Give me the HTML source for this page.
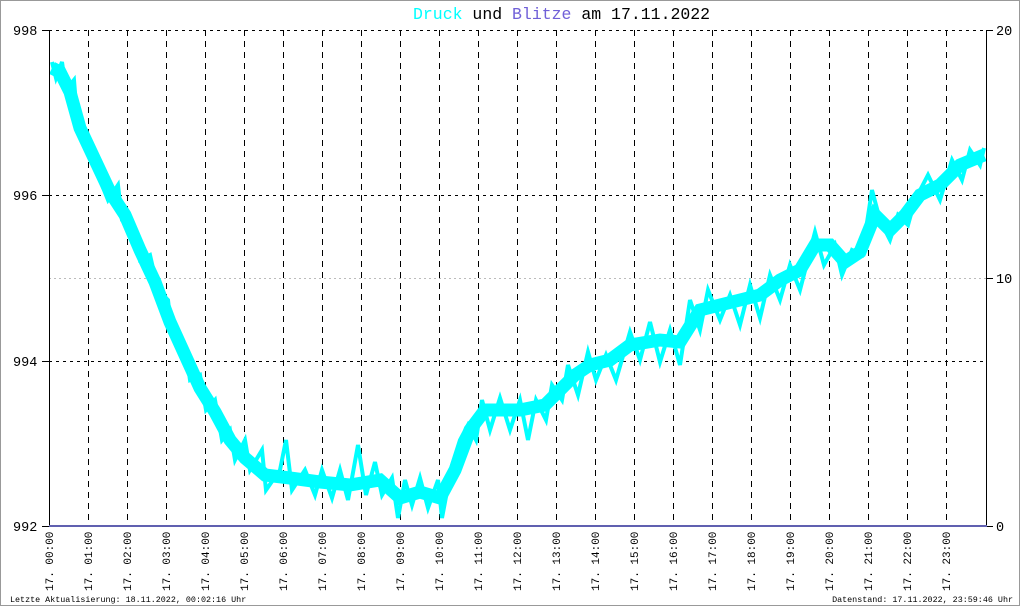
<!DOCTYPE html>
<html><head><meta charset="utf-8"><style>
html,body{margin:0;padding:0;background:#fff}
svg{display:block}
text{font-family:"Liberation Mono",monospace}
</style></head><body>
<svg width="1020" height="606" viewBox="0 0 1020 606" xmlns="http://www.w3.org/2000/svg">
<rect x="0.5" y="0.5" width="1019" height="605" fill="#fff" stroke="#999"/>
<text x="413" y="19" font-size="16.5"><tspan fill="#00ffff">Druck</tspan><tspan fill="#000"> und </tspan><tspan fill="#7060d8">Blitze</tspan><tspan fill="#000"> am 17.11.2022</tspan></text>
<g stroke="#000" stroke-width="1" stroke-dasharray="3,4">
<line x1="49" y1="30.5" x2="987" y2="30.5"/>
<line x1="49" y1="195.5" x2="987" y2="195.5"/>
<line x1="49" y1="361.5" x2="987" y2="361.5"/>
</g>
<line x1="49" y1="278.5" x2="987" y2="278.5" stroke="#bbb" stroke-dasharray="2,3"/>
<g stroke="#000" stroke-dasharray="6,5">
<line x1="88.5" y1="30" x2="88.5" y2="526"/><line x1="127.5" y1="30" x2="127.5" y2="526"/>
<line x1="166.5" y1="30" x2="166.5" y2="526"/><line x1="205.5" y1="30" x2="205.5" y2="526"/>
<line x1="244.5" y1="30" x2="244.5" y2="526"/><line x1="283.5" y1="30" x2="283.5" y2="526"/>
<line x1="322.5" y1="30" x2="322.5" y2="526"/><line x1="361.5" y1="30" x2="361.5" y2="526"/>
<line x1="400.5" y1="30" x2="400.5" y2="526"/><line x1="439.5" y1="30" x2="439.5" y2="526"/>
<line x1="478.5" y1="30" x2="478.5" y2="526"/><line x1="517.5" y1="30" x2="517.5" y2="526"/>
<line x1="556.5" y1="30" x2="556.5" y2="526"/><line x1="595.5" y1="30" x2="595.5" y2="526"/>
<line x1="634.5" y1="30" x2="634.5" y2="526"/><line x1="673.5" y1="30" x2="673.5" y2="526"/>
<line x1="712.5" y1="30" x2="712.5" y2="526"/><line x1="751.5" y1="30" x2="751.5" y2="526"/>
<line x1="790.5" y1="30" x2="790.5" y2="526"/><line x1="829.5" y1="30" x2="829.5" y2="526"/>
<line x1="868.5" y1="30" x2="868.5" y2="526"/><line x1="907.5" y1="30" x2="907.5" y2="526"/>
<line x1="946.5" y1="30" x2="946.5" y2="526"/>
</g>
<polyline fill="none" stroke="#00ffff" stroke-width="13" stroke-linejoin="miter" points="52,68 60,72 70,92 80,128 95,160 110,192 125,215 140,250 155,282 170,322 185,355 200,388 215,412 230,440 245,458 265,475 290,478 320,482 350,485 380,480 400,498 420,492 440,498 455,470 470,430 485,410 520,410 545,405 560,390 575,375 590,365 610,360 630,345 660,340 680,342 700,310 720,305 740,300 760,295 780,280 800,270 815,245 830,245 845,262 860,252 875,215 890,230 905,215 920,195 940,185 960,165 984,155"/>
<polyline fill="none" stroke="#00ffff" stroke-width="4" points="52,62 56,78 62,62 66,90 74,80 78,130 90,140 100,180 108,200 118,185 122,220 135,230 140,260 150,255 158,290 168,300 172,335 185,345 190,380 200,375 206,410 215,400 222,440 230,430 235,460 245,440 250,470 262,450 266,490 280,470 286,440 292,490 305,470 315,495 322,470 332,498 340,470 348,500 358,445 366,495 375,462 382,495 392,478 398,518 405,480 412,505 420,478 428,508 438,480 442,518 452,465 460,440 468,425 476,440 482,400 490,430 500,398 510,430 520,400 528,440 536,400 546,420 552,385 562,400 568,365 578,395 588,352 596,380 606,355 616,380 630,332 640,360 650,322 660,362 670,330 680,365 690,300 700,330 708,290 720,320 730,295 740,325 750,285 760,318 770,275 780,300 790,265 800,290 815,232 824,265 835,245 842,275 852,250 862,255 872,190 880,220 890,240 898,215 908,225 915,200 928,175 940,200 952,160 962,180 970,150 980,165 984,148"/>
<line x1="49.5" y1="30" x2="49.5" y2="526" stroke="#000"/>
<line x1="986.5" y1="30" x2="986.5" y2="526" stroke="#000"/>
<line x1="49" y1="526" x2="987" y2="526" stroke="#6060b0" stroke-width="2"/>
<g stroke="#000"><line x1="42" y1="30.5" x2="49" y2="30.5"/><line x1="42" y1="195.5" x2="49" y2="195.5"/><line x1="42" y1="361.5" x2="49" y2="361.5"/><line x1="42" y1="526.5" x2="49" y2="526.5"/>
<line x1="987" y1="30.5" x2="993" y2="30.5"/><line x1="987" y1="278.5" x2="993" y2="278.5"/><line x1="987" y1="526.5" x2="993" y2="526.5"/></g>
<g font-size="13.5" fill="#000">
<text x="13" y="35">998</text><text x="13" y="200">996</text><text x="13" y="366">994</text><text x="13" y="531">992</text>
<text x="996" y="35">20</text><text x="996" y="283">10</text><text x="996" y="531">0</text>
</g>
<g font-size="11" fill="#000">
<text transform="translate(53,591) rotate(-90)">17. 00:00</text>
<text transform="translate(92,591) rotate(-90)">17. 01:00</text>
<text transform="translate(131,591) rotate(-90)">17. 02:00</text>
<text transform="translate(170,591) rotate(-90)">17. 03:00</text>
<text transform="translate(209,591) rotate(-90)">17. 04:00</text>
<text transform="translate(248,591) rotate(-90)">17. 05:00</text>
<text transform="translate(287,591) rotate(-90)">17. 06:00</text>
<text transform="translate(326,591) rotate(-90)">17. 07:00</text>
<text transform="translate(365,591) rotate(-90)">17. 08:00</text>
<text transform="translate(404,591) rotate(-90)">17. 09:00</text>
<text transform="translate(443,591) rotate(-90)">17. 10:00</text>
<text transform="translate(482,591) rotate(-90)">17. 11:00</text>
<text transform="translate(521,591) rotate(-90)">17. 12:00</text>
<text transform="translate(560,591) rotate(-90)">17. 13:00</text>
<text transform="translate(599,591) rotate(-90)">17. 14:00</text>
<text transform="translate(638,591) rotate(-90)">17. 15:00</text>
<text transform="translate(677,591) rotate(-90)">17. 16:00</text>
<text transform="translate(716,591) rotate(-90)">17. 17:00</text>
<text transform="translate(755,591) rotate(-90)">17. 18:00</text>
<text transform="translate(794,591) rotate(-90)">17. 19:00</text>
<text transform="translate(833,591) rotate(-90)">17. 20:00</text>
<text transform="translate(872,591) rotate(-90)">17. 21:00</text>
<text transform="translate(911,591) rotate(-90)">17. 22:00</text>
<text transform="translate(950,591) rotate(-90)">17. 23:00</text>
</g>
<text x="10" y="602" font-size="8.4" fill="#000">Letzte Aktualisierung: 18.11.2022, 00:02:16 Uhr</text>
<text x="1013" y="602" font-size="8.4" fill="#000" text-anchor="end">Datenstand: 17.11.2022, 23:59:46 Uhr</text>
</svg>
</body></html>
